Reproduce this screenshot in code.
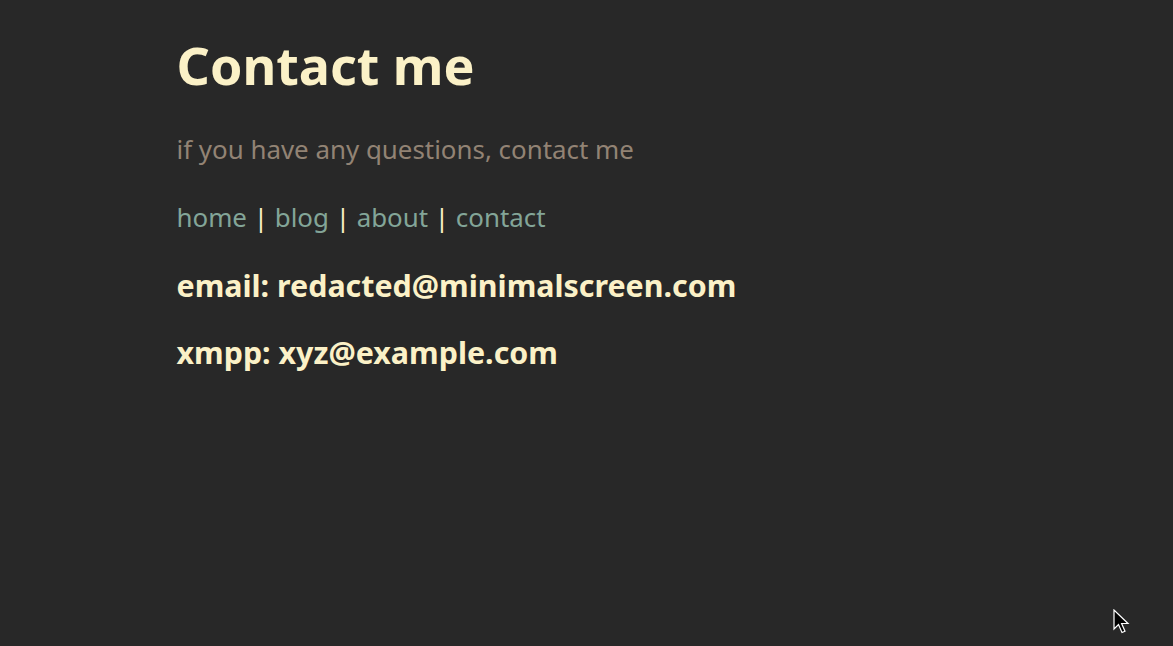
import React from "react";

const links = ["home", "blog", "about", "contact"];

export default function App() {
  return (
    <div className="relative min-h-[646px] bg-[#282828] font-['Noto_Sans',sans-serif] text-[#fbf1c7]">
      <main className="mx-auto w-[820px] pt-[29px]">
        <h1 className="text-[52px] font-bold leading-[72px]">Contact me</h1>
        <p className="mt-[30px] text-[25.9px] leading-[36px] text-[#928374]">
          if you have any questions, contact me
        </p>
        <nav className="mt-[32px] text-[25.9px] leading-[36px]">
          {links.map((link, i) => (
            <React.Fragment key={link}>
              {i > 0 && <span className="text-[#fbf1c7]"> | </span>}
              <a href="#" className="text-[#83a598]">
                {link}
              </a>
            </React.Fragment>
          ))}
        </nav>
        <h3 className="mt-[31px] text-[30.4px] font-bold leading-[40px]">
          email: redacted@minimalscreen.com
        </h3>
        <h3 className="mt-[27px] text-[30.4px] font-bold leading-[40px]">xmpp: xyz@example.com</h3>
      </main>
      <svg className="absolute left-[1113px] top-[609px]" width="19" height="28" viewBox="0 0 19 28">
        <path d="M1 1 L1 20 L5.5 15.5 L9 23.5 L12 22.2 L8.6 14.5 L15 14.5 Z" fill="#000" stroke="#fff" strokeWidth="1.2" strokeLinejoin="miter" />
      </svg>
    </div>
  );
}
